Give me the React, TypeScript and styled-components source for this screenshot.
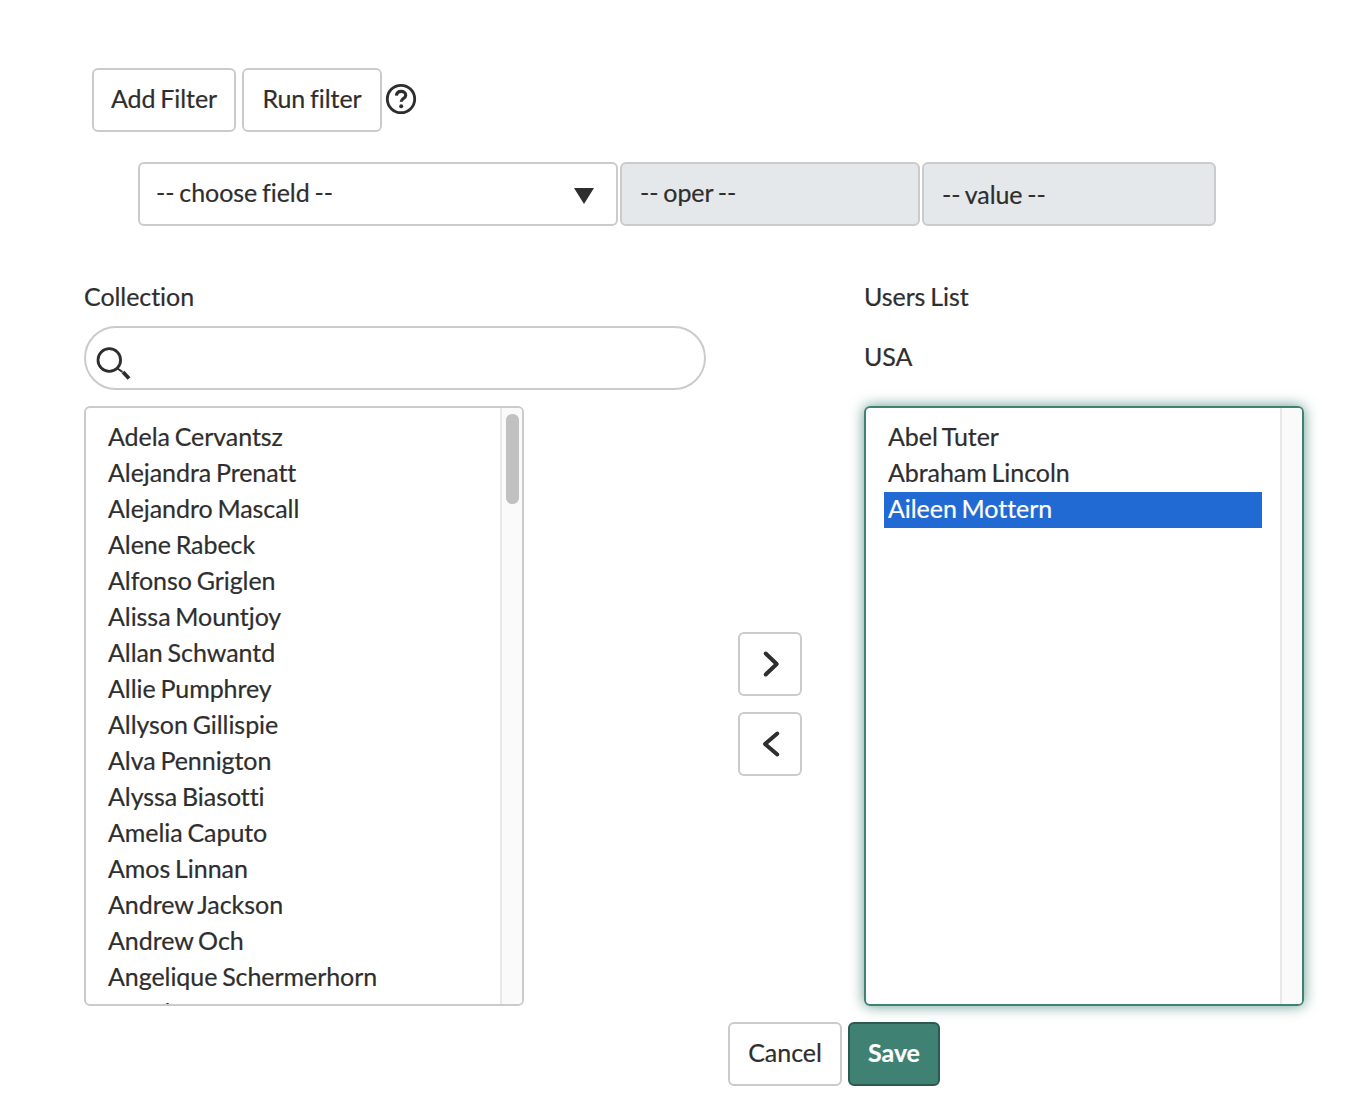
import styled, { createGlobalStyle } from "styled-components"

const users = [
  "Adela Cervantsz",
  "Alejandra Prenatt",
  "Alejandro Mascall",
  "Alene Rabeck",
  "Alfonso Griglen",
  "Alissa Mountjoy",
  "Allan Schwantd",
  "Allie Pumphrey",
  "Allyson Gillispie",
  "Alva Pennigton",
  "Alyssa Biasotti",
  "Amelia Caputo",
  "Amos Linnan",
  "Andrew Jackson",
  "Andrew Och",
  "Angelique Schermerhorn",
  "Angelo Ferentz",
]

const selectedUsers = ["Abel Tuter", "Abraham Lincoln", "Aileen Mottern"]

const GlobalStyle = createGlobalStyle`
  html, body {
    margin: 0;
    background: #fff;
  }
  body {
    font-family: "Lato", "Liberation Sans", sans-serif;
    font-size: 25px;
    font-variant-ligatures: none;
    word-spacing: -1.5px;
    letter-spacing: -0.06px;
    -webkit-text-stroke: 0.2px currentColor;
    color: #2e2e2e;
  }
  * {
    box-sizing: border-box;
  }
`

const Page = styled.div`
  width: 1358px;
  height: 1098px;
  padding: 68px 0 0 84px;
  overflow: hidden;
`

const Toolbar = styled.div`
  display: flex;
  align-items: center;
  gap: 6px;
  margin-left: 8px;
`

const Button = styled.button<{ $primary?: boolean; $width: number }>`
  width: ${({ $width }) => $width}px;
  height: 64px;
  padding: 0 0 5px;
  border-radius: 6px;
  border: 2px solid ${({ $primary }) => ($primary ? "#2b5a50" : "#cbcbcb")};
  background: ${({ $primary }) => ($primary ? "#3f8172" : "#fff")};
  color: ${({ $primary }) => ($primary ? "#fff" : "#2e2e2e")};
  font: inherit;
  font-weight: ${({ $primary }) => ($primary ? 700 : 400)};
  word-spacing: inherit;
  letter-spacing: inherit;
`

const HelpIcon = styled.svg`
  width: 32px;
  height: 32px;
  margin: -2px 0 0 -3px;
`

const FilterRow = styled.div`
  display: flex;
  gap: 2px;
  margin: 30px 0 0 54px;
`

const FilterField = styled.div<{ $disabled?: boolean; $width: number; $lift: number }>`
  display: flex;
  align-items: center;
  justify-content: space-between;
  width: ${({ $width }) => $width}px;
  height: 64px;
  padding: 0 22px ${({ $lift }) => $lift}px ${({ $disabled }) => ($disabled ? 18 : 16)}px;
  border-radius: 6px;
  border: 2px solid #cbcbcb;
  background: ${({ $disabled }) => ($disabled ? "#e5e8eb" : "#fff")};
`

const Caret = styled.svg`
  width: 20px;
  height: 16px;
  margin-top: 8px;
`

const Columns = styled.div`
  display: grid;
  grid-template-columns: 654px 126px 440px;
  grid-template-rows: 123px 600px;
  margin-top: 57px;
`

const Label = styled.div<{ $gap?: number }>`
  height: 26px;
  margin-top: ${({ $gap }) => $gap ?? 0}px;
  line-height: 26px;
`

const SearchBox = styled.div`
  display: flex;
  align-items: center;
  width: 622px;
  height: 64px;
  margin-top: 17px;
  padding-left: 10px;
  border-radius: 32px;
  border: 2px solid #cbcbcb;
`

const SearchIcon = styled.svg`
  flex: none;
  width: 38px;
  height: 44px;
`

const SearchInput = styled.input`
  flex: 1;
  min-width: 0;
  border: 0;
  outline: 0;
  background: none;
  font: inherit;
`

const ListBox = styled.div<{ $focused?: boolean }>`
  display: flex;
  width: 440px;
  height: 600px;
  border-radius: 6px;
  overflow: hidden;
  border: 2px solid ${({ $focused }) => ($focused ? "#3f8172" : "#cbcbcb")};
  ${({ $focused }) => $focused && "box-shadow: 0 0 14px rgba(63, 129, 114, 0.8);"}
`

const ListItems = styled.div`
  flex: 1;
  min-width: 0;
  padding: 12px 18px 0;
  overflow: hidden;
`

const ListItem = styled.div<{ $selected?: boolean }>`
  height: 36px;
  line-height: 32px;
  padding-left: 4px;
  white-space: nowrap;
  background: ${({ $selected }) => ($selected ? "#2169d3" : "none")};
  color: ${({ $selected }) => ($selected ? "#fff" : "inherit")};
`

const Gutter = styled.div`
  flex: none;
  width: 22px;
  padding: 6px 3px 0 4px;
  border-left: 2px solid #e8e8e8;
  background: #fafafa;
`

const Thumb = styled.div`
  height: 90px;
  border-radius: 6px;
  background: #c1c1c1;
`

const Arrows = styled.div`
  display: flex;
  flex-direction: column;
  justify-content: center;
  gap: 16px;
  padding-bottom: 4px;
`

const ArrowButton = styled.button`
  display: flex;
  align-items: center;
  justify-content: center;
  width: 64px;
  height: 64px;
  padding: 0;
  border-radius: 6px;
  border: 2px solid #cbcbcb;
  background: #fff;
`

const Footer = styled.div`
  display: flex;
  gap: 6px;
  margin: 16px 0 0 644px;
`

const Chevron = ({ d }: { d: string }) => (
  <svg width="32" height="32" viewBox="0 0 32 32" fill="none">
    <path d={d} stroke="#2e2e2e" strokeWidth="4" strokeLinecap="round" strokeLinejoin="round" />
  </svg>
)

const App = () => (
  <Page>
    <GlobalStyle />
    <Toolbar>
      <Button $width={144}>Add Filter</Button>
      <Button $width={140}>Run filter</Button>
      <HelpIcon viewBox="0 0 32 32" fill="none" stroke="#2e2e2e">
        <circle cx="16" cy="16" r="13.7" strokeWidth="2.8" />
        <path d="M11.400 12.600c.3-2.800 2.300-4.200 4.800-4.200 2.600 0 4.500 1.500 4.500 3.800 0 3.300-4.500 3.400-4.500 6.600" strokeWidth="3.200" />
        <circle cx="16.200" cy="23.200" r="2" fill="#2e2e2e" stroke="none" />
      </HelpIcon>
    </Toolbar>
    <FilterRow>
      <FilterField $width={480} $lift={4}>
        -- choose field --
        <Caret viewBox="0 0 20 16">
          <path d="M0 0h20L10 16z" fill="#2e2e2e" />
        </Caret>
      </FilterField>
      <FilterField $disabled $width={300} $lift={4}>
        -- oper --
      </FilterField>
      <FilterField $disabled $width={294} $lift={0}>
        -- value --
      </FilterField>
    </FilterRow>
    <Columns>
      <div>
        <Label>Collection</Label>
        <SearchBox>
          <SearchIcon viewBox="0 0 38 44" fill="none" stroke="#2e2e2e">
            <circle cx="13.300" cy="24" r="11.300" strokeWidth="2.800" />
            <path d="M21.500 32.500l5 3.500" strokeWidth="2" />
            <path d="M27 36l6 6.500" strokeWidth="3.800" />
          </SearchIcon>
          <SearchInput />
        </SearchBox>
      </div>
      <div />
      <div>
        <Label>Users List</Label>
        <Label $gap={34}>USA</Label>
      </div>
      <ListBox>
        <ListItems>
          {users.map((name) => (
            <ListItem key={name}>{name}</ListItem>
          ))}
        </ListItems>
        <Gutter>
          <Thumb />
        </Gutter>
      </ListBox>
      <Arrows>
        <ArrowButton aria-label="Add">
          <Chevron d="M11.700 5.500L22.700 16 11.700 26.500" />
        </ArrowButton>
        <ArrowButton aria-label="Remove">
          <Chevron d="M23.300 5.500L11 16l12.300 10.500" />
        </ArrowButton>
      </Arrows>
      <ListBox $focused>
        <ListItems>
          {selectedUsers.map((name, i) => (
            <ListItem key={name} $selected={i === 2}>
              {name}
            </ListItem>
          ))}
        </ListItems>
        <Gutter />
      </ListBox>
    </Columns>
    <Footer>
      <Button $width={114}>Cancel</Button>
      <Button $primary $width={92}>
        Save
      </Button>
    </Footer>
  </Page>
)

export default App
